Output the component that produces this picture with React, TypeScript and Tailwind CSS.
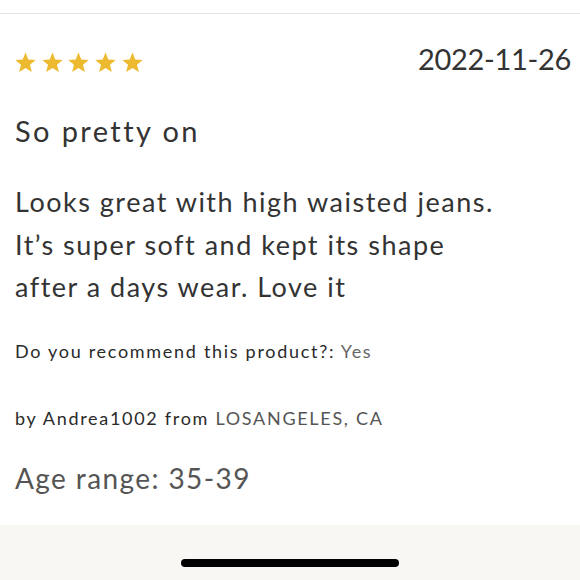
function Star() {
  return (
    <svg viewBox="0 0 24 24" className="w-[23px] h-[23px]" fill="#EDB92F">
      <path d="M12 1.6l2.9 7.2 7.7.5-5.9 5 1.9 7.5L12 17.7l-6.6 4.1 1.9-7.5-5.9-5 7.7-.5z" />
    </svg>
  );
}

export default function App() {
  return (
    <div className="w-[580px] h-[580px] bg-white flex flex-col font-['Lato',sans-serif] text-[#333]">
      <div className="h-[13px]" />
      <div className="border-t border-[#e3e3e3]" />
      <div className="flex-1 px-[15px]">
        <div className="flex items-start justify-between mt-[30px]">
          <div className="flex gap-[3.7px] mt-[7px] ml-[-1px]">
            <Star />
            <Star />
            <Star />
            <Star />
            <Star />
          </div>
          <span className="text-[29px] leading-none tracking-[-0.3px] mr-[-6px]">2022-11-26</span>
        </div>
        <h2 className="text-[29px] leading-none tracking-[2.4px] mt-[42px]">So pretty on</h2>
        <p className="text-[27px] leading-[42.5px] tracking-[1.5px] mt-[36px]">
          Looks great with high waisted jeans.
          <br />
          It’s super soft and kept its shape
          <br />
          after a days wear. Love it
        </p>
        <p className="text-[18px] leading-none tracking-[1.7px] text-[#2a2a2a] mt-[33px]">
          Do you recommend this product?: <span className="text-[#666]">Yes</span>
        </p>
        <p className="text-[18px] leading-none tracking-[1.7px] text-[#2a2a2a] mt-[49px]">
          by Andrea1002 from <span className="text-[#555]">LOSANGELES, CA</span>
        </p>
        <p className="text-[28px] leading-none tracking-[1.4px] text-[#555] mt-[37px]">Age range: 35-39</p>
      </div>
      <div className="h-[55px] bg-[#f8f7f4] flex items-end justify-center pb-[13px]">
        <div className="w-[218px] h-[8px] rounded-full bg-black" />
      </div>
    </div>
  );
}
